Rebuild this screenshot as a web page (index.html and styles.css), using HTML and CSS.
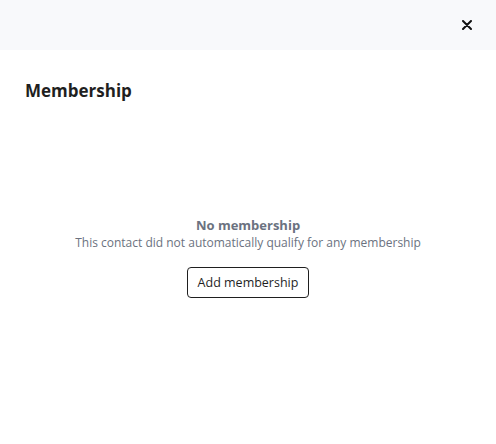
FILE: index.html
```html
<!DOCTYPE html>
<html lang="en">
<head>
  <meta charset="UTF-8">
  <title>Membership</title>
  <link rel="stylesheet" href="styles.css">
</head>
<body>
  <div class="modal">
    <div class="modal-header">
      <button class="close-btn" aria-label="Close">
        <svg width="10" height="10" viewBox="0 0 10 10"><path d="M1 1L9 9M9 1L1 9" stroke="#111" stroke-width="2" stroke-linecap="round"/></svg>
      </button>
    </div>
    <div class="modal-body">
      <h2 class="title">Membership</h2>
      <div class="empty">
        <div class="empty-title">No membership</div>
        <div class="empty-text">This contact did not automatically qualify for any membership</div>
        <button class="add-btn">Add membership</button>
      </div>
    </div>
  </div>
</body>
</html>
```

FILE: styles.css
```css
body {
  margin: 0;
  font-family: "Open Sans", "Noto Sans", sans-serif;
  background: #fff;
  color: #1f1f1f;
}
.modal-header {
  height: 50px;
  background: #f8f9fb;
  display: flex;
  align-items: center;
  justify-content: flex-end;
  padding: 0 24px;
}
.close-btn {
  border: none;
  background: none;
  padding: 0;
  width: 10px;
  height: 10px;
  display: flex;
  cursor: pointer;
}
.modal-body {
  padding: 28px 25px;
}
.title {
  margin: 0;
  font-size: 17px;
  font-weight: 700;
  line-height: 26px;
  color: #1f1f1f;
}
.empty {
  margin-top: 112px;
  display: flex;
  flex-direction: column;
  align-items: center;
  text-align: center;
}
.empty-title {
  font-size: 13px;
  font-weight: 700;
  color: #6b7280;
  line-height: 18px;
}
.empty-text {
  font-size: 12px;
  color: #6b7280;
  line-height: 18px;
}
.add-btn {
  margin-top: 15px;
  font-family: inherit;
  font-size: 12.5px;
  color: #1f1f1f;
  background: #fff;
  border: 1px solid #1f1f1f;
  border-radius: 4px;
  padding: 0 10px;
  height: 31px;
  cursor: pointer;
}
```
